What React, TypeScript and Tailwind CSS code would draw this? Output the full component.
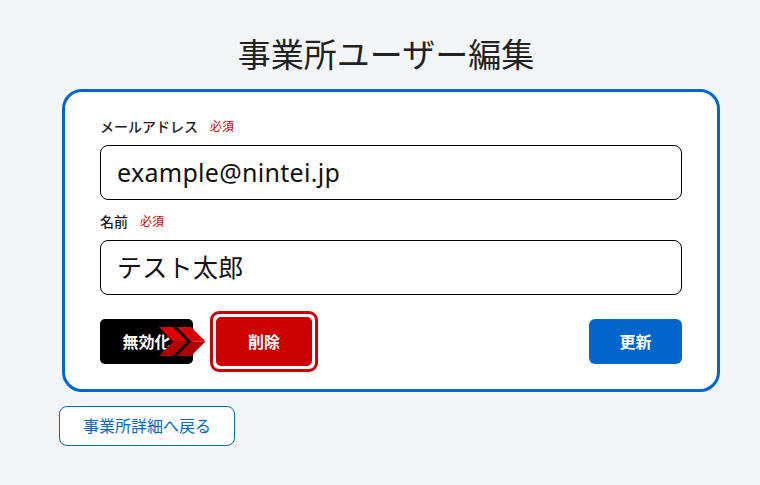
function Chevrons() {
  return (
    <svg
      className="absolute left-[59px] top-[16px]"
      width="47"
      height="29"
      viewBox="0 0 47 29"
      aria-hidden="true"
    >
      {[0, 18].map((x) => (
        <g key={x} transform={`translate(${x} 0)`}>
          <polygon points="0,0 14,0 28.5,14.5 14,14.5" fill="#dd0000" />
          <polygon points="14,14.5 28.5,14.5 14,29 0,29" fill="#b00000" />
        </g>
      ))}
    </svg>
  );
}

function Field({ label, value }: { label: string; value: string }) {
  return (
    <div className="flex flex-col gap-2">
      <div className="flex items-center gap-3 leading-5">
        <span className="text-[14px] font-medium text-[#222]">{label}</span>
        <span className="text-[12px] text-[#d40000]">必須</span>
      </div>
      <div className="flex h-[55px] items-center rounded-lg border border-black bg-white px-4 text-[25px] tracking-[0.3px] text-[#111]">
        {value}
      </div>
    </div>
  );
}

export default function App() {
  return (
    <div
      className="min-h-[485px] bg-[#f3f6f9] pt-[31px]"
      style={{ fontFamily: '"Noto Sans", "Noto Sans CJK JP", sans-serif' }}
    >
      <div className="ml-[59px] w-[663px]">
        <h1 className="pr-[9px] text-center text-[33px] leading-[48px] text-[#222]">
          事業所ユーザー編集
        </h1>

        <div className="ml-[3px] mt-[10px] w-[658px] rounded-[20px] border-[3px] border-[#0066cc] bg-white px-[35px] pb-[17px] pt-[25px]">
          <Field label="メールアドレス" value="example@nintei.jp" />
          <div className="mt-3">
            <Field label="名前" value="テスト太郎" />
          </div>

          <div className="relative mt-[16px] flex items-center">
            <button className="flex h-[45px] w-[93px] items-center justify-center rounded-[5px] bg-black text-[16px] font-bold text-white">
              無効化
            </button>
            <Chevrons />
            <div className="ml-[17px] rounded-[9px] border-[3px] border-[#cc0000] bg-white p-[3px]">
              <button className="flex h-[49px] w-[96px] items-center justify-center rounded-[5px] bg-[#cc0000] text-[16px] font-bold text-white">
                削除
              </button>
            </div>
            <button className="ml-auto flex h-[45px] w-[93px] items-center justify-center rounded-md bg-[#0066cc] text-[16px] font-bold text-white">
              更新
            </button>
          </div>
        </div>

        <button className="mt-[14px] flex h-[40px] w-[176px] items-center justify-center rounded-lg border border-[#0066cc] bg-white text-[16px] text-[#0066cc]">
          事業所詳細へ戻る
        </button>
      </div>
    </div>
  );
}
